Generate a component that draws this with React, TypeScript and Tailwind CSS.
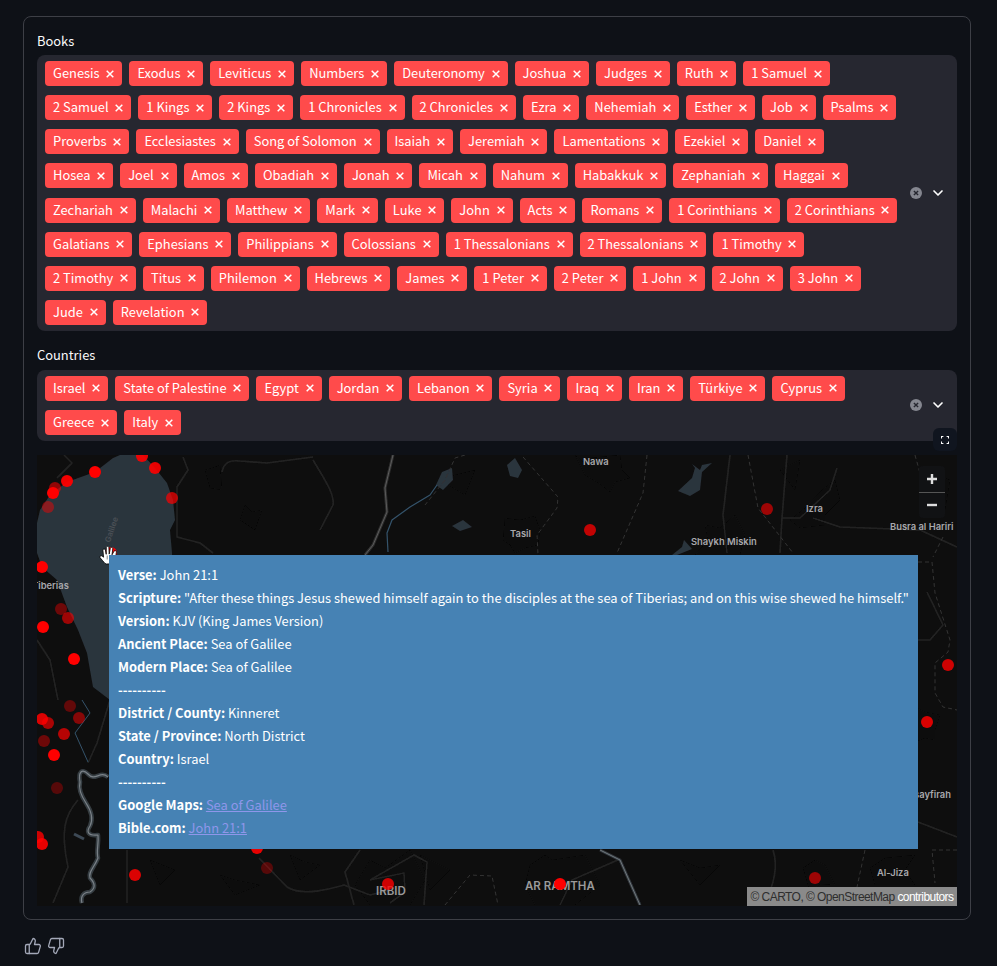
import { ChevronDown, ThumbsDown, ThumbsUp } from "lucide-react";

const books = [
  ["Genesis", "Exodus", "Leviticus", "Numbers", "Deuteronomy", "Joshua", "Judges", "Ruth", "1 Samuel"],
  ["2 Samuel", "1 Kings", "2 Kings", "1 Chronicles", "2 Chronicles", "Ezra", "Nehemiah", "Esther", "Job", "Psalms"],
  ["Proverbs", "Ecclesiastes", "Song of Solomon", "Isaiah", "Jeremiah", "Lamentations", "Ezekiel", "Daniel"],
  ["Hosea", "Joel", "Amos", "Obadiah", "Jonah", "Micah", "Nahum", "Habakkuk", "Zephaniah", "Haggai"],
  ["Zechariah", "Malachi", "Matthew", "Mark", "Luke", "John", "Acts", "Romans", "1 Corinthians", "2 Corinthians"],
  ["Galatians", "Ephesians", "Philippians", "Colossians", "1 Thessalonians", "2 Thessalonians", "1 Timothy"],
  ["2 Timothy", "Titus", "Philemon", "Hebrews", "James", "1 Peter", "2 Peter", "1 John", "2 John", "3 John"],
  ["Jude", "Revelation"],
];

const countries = [
  ["Israel", "State of Palestine", "Egypt", "Jordan", "Lebanon", "Syria", "Iraq", "Iran", "Türkiye", "Cyprus"],
  ["Greece", "Italy"],
];

// x, y, opacity
const dots: [number, number, number][] = [
  [95, 472, 1], [67, 481, 0.95], [55, 488, 0.55], [53, 493, 1], [48, 507, 0.45], [142, 456, 0.9], [155, 468, 0.9],
  [172, 498, 0.7], [42, 567, 1], [61, 609, 0.4], [68, 618, 0.6], [43, 627, 1], [74, 659, 1], [42, 719, 0.85],
  [48, 723, 0.65], [70, 706, 0.35], [79, 718, 0.5], [64, 734, 0.7], [44, 741, 0.4], [54, 755, 1], [57, 788, 0.3],
  [38, 837, 0.8], [42, 844, 0.9], [135, 875, 0.85], [257, 848, 0.9], [267, 868, 0.3], [388, 884, 0.8],
  [560, 884, 1], [815, 878, 0.6], [948, 665, 0.8], [927, 722, 0.85], [590, 530, 0.75], [767, 509, 0.6],
  [111, 553, 1],
];

const roads = [
  "M64 455L72 463L57 478", "M183 457L188 470L177 487L177 537L200 543L213 553",
  "M222 472C224 462 230 460 240 461L267 463L313 457", "M313 460C325 480 335 495 333 505L320 530", "M730 455L723 515L727 553",
  "M787 455L782 518L780 553", "M782 518L800 518L830 490L837 468", "M813 518L840 527L920 530L957 547",
  "M927 592L943 625L930 640L918 640", "M918 822L957 837", "M78 800C65 815 60 830 68 867L53 903", "M127 850L127 903",
  "M110 700L97 743L88 763", "M259 858L287 887C300 895 320 892 344 885L370 895L390 890", "M360 850L345 872L354 905",
  "M370 880L414 855L427 862L424 905", "M370 880L404 873L405 892L390 903", "M620 859L572 880L560 905",
  "M773 850C778 865 775 885 763 905", "M37 640L50 660L58 700",
];

const dashed = [
  "M523 457L558 497L557 508L537 535L538 555", "M647 455L643 493L617 553", "M748 455L758 508L793 553",
  "M915 455L920 473", "M943 537L933 557", "M445 905L470 875L492 876L498 905", "M865 850L857 887",
  "M918 562L932 562L935 593L950 640L948 652L935 663L935 693L943 707L957 710", "M957 850L932 850L935 883",
  "M465 455L455 458L445 480L425 505",
];

const blobs = [
  "M575 455L583 462L590 458L620 455L622 470L630 478L615 482L610 492L600 484L585 475Z",
  "M505 518L520 520L535 516L540 530L538 545L525 548L515 553L510 545L503 540Z",
  "M790 520L805 508L822 490L835 480L840 500L825 515L825 525L800 528Z",
  "M705 525L720 528L735 515L745 535L740 555L695 555L708 540Z",
  "M370 860L385 868L410 850L425 880L410 905L370 905L355 885Z",
  "M530 865L545 855L552 860L585 855L600 885L575 905L535 905L525 885Z",
  "M803 868L815 860L825 865L835 885L820 884L810 892Z", "M870 868L885 858L915 855L905 870L915 885L875 885Z",
  "M915 707L925 712L940 715L935 730L935 740L925 738L915 742Z", "M205 470L212 468L220 465L222 490L210 488Z",
  "M245 505L252 512L262 510L255 530L240 520Z", "M290 855L305 862L320 865L300 880Z", "M150 860L175 870L160 885Z",
  "M220 875L235 880L260 885L235 895Z", "M440 480L455 475L475 470L465 495Z", "M780 470L790 465L800 460L795 490Z",
  "M925 470L950 480L945 510L930 500Z", "M420 855L450 870L430 890Z", "M680 860L700 868L720 865L700 885Z",
];

const jordanRiver =
  "M108 777C100 770 95 782 88 774C82 768 78 772 80 782C78 790 82 797 86 803C92 812 93 820 90 826C86 832 88 836 98 835C99 845 96 850 98 858C94 868 88 872 90 878C95 883 96 888 90 892C84 892 80 896 82 903";

const Tag = ({ label }: { label: string }) => (
  <span className="flex h-[25px] items-center rounded bg-[#ff4b4b] pl-2 pr-[6px] text-[12.9px] leading-none text-white">
    <span className="whitespace-nowrap">{label}</span>
    <svg className="ml-[4.8px]" width="12" height="12" viewBox="0 0 12 12" fill="none" stroke="#fff" strokeWidth="1.5">
      <path d="M2.7 2.7L9.3 9.3M9.3 2.7L2.7 9.3" />
    </svg>
  </span>
);

const MultiSelect = ({ label, rows }: { label: string; rows: string[][] }) => (
  <div>
    <div className="flex h-[22px] items-center text-[12.9px] leading-none text-[#fafafa]">{label}</div>
    <div className="mt-[3px] flex items-center rounded-lg bg-[#262730]">
      <div className="flex flex-1 flex-col gap-y-[9.14px] py-1.5 pl-2">
        {rows.map((row) => (
          <div key={row[0]} className="flex gap-x-[7px]">
            {row.map((o) => (
              <Tag key={o} label={o} />
            ))}
          </div>
        ))}
      </div>
      <div className="flex w-[59px] items-center pl-3">
        <svg width="12" height="12" viewBox="0 0 12 12">
          <circle cx="6" cy="6" r="6" fill="#84868f" />
          <path d="M3.9 3.9L8.1 8.1M8.1 3.9L3.9 8.1" stroke="#262730" strokeWidth="1.4" />
        </svg>
        <ChevronDown className="ml-[8px] text-white" size={16} strokeWidth={2.5} />
      </div>
    </div>
  </div>
);

const MapCanvas = () => (
  <svg className="block h-full w-full" viewBox="37 455 920 451" fontFamily="Inter, sans-serif" fontWeight="600">
    <defs>
      <filter id="soft" x="0" y="0" width="1" height="1">
        <feGaussianBlur stdDeviation="0.5" />
      </filter>
    </defs>
    <rect x="37" y="455" width="920" height="451" fill="#0e0e0e" />
    <g filter="url(#soft)">
      {blobs.map((d) => (
        <path key={d} d={d} fill="#0a0a0a" />
      ))}
      <path
        d="M37 523L40 510L50 495L67 482L95 472L113 458L120 455L143 455L155 468L167 483L173 500L175 520L170 530L172 553L172 700L110 700L93 687L87 653L78 630L67 607L57 580L42 567L37 553Z"
        fill="#2b343c"
      />
      <g fill="#2b343c">
        <path d="M436 485L442 472L452 468L453 480L443 490Z" />
        <path d="M507 465L515 458L522 470L518 478L510 476Z" />
        <path d="M452 526L463 520L472 527L460 531Z" />
        <path d="M678 491L692 478L695 468L692 464L700 470L702 465L712 463L702 472L700 490L690 496Z" />
        <path d="M672 555L682 547L684 540L692 549L672 557Z" />
      </g>
      <g fill="none" strokeLinejoin="round">
        {roads.map((d) => (
          <path key={d} d={d} stroke="#232323" strokeWidth="1.6" />
        ))}
        {dashed.map((d) => (
          <path key={d} d={d} stroke="#333" strokeWidth="1" strokeDasharray="4 3" />
        ))}
        <path d="M393 455L385 488L387 512L373 545L365 555" stroke="#2e2e2e" strokeWidth="3" />
        <path d="M393 455L385 488L387 512L373 545L365 555" stroke="#5c5c5c" strokeWidth="1" />
        <path d="M437 485L430 495L410 507L392 520L387 533L388 552" stroke="#34536b" strokeWidth="1.2" />
        <path d="M82 700L90 713L75 733L88 762" stroke="#34536b" strokeWidth="1" />
        <path d={jordanRiver} stroke="#363d42" strokeWidth="4.5" />
        <path d={jordanRiver} stroke="#7a8187" strokeWidth="1.2" />
        <path d="M600 850L620 860L640 905" stroke="#32383d" strokeWidth="3" />
        <path d="M600 850L620 860L640 905" stroke="#70777d" strokeWidth="1" />
        <path d="M74 834L84 839" stroke="#3c4a54" strokeWidth="3" />
      </g>
    </g>
    <g fill="#a8a8ac" fontSize="9.4">
      <text x="583" y="465">Nawa</text>
      <text x="510" y="537">Tasil</text>
      <text x="691" y="545">Shaykh Miskin</text>
      <text x="806" y="512">Izra</text>
      <text x="890" y="530">Busra al Hariri</text>
      <text x="32" y="589">Tiberias</text>
      <text x="951" y="798" textAnchor="end">Al Busayfirah</text>
      <text x="877" y="876">Al-Jiza</text>
      <text x="376" y="895" fontSize="11.5" fill="#9a9a9a">IRBID</text>
      <text x="525" y="890" fontSize="11.5" fill="#9a9a9a">AR RAMTHA</text>
      <text x="0" y="0" fontSize="8" fill="#4a5056" transform="translate(110 543) rotate(-72)">Galilee</text>
    </g>
    {dots.map(([x, y, o]) => (
      <circle key={`${x}-${y}`} cx={x} cy={y} r="6" fill="#ff0000" fillOpacity={o} />
    ))}
  </svg>
);

const HandCursor = () => (
  <svg className="absolute left-[62px] top-[90px]" width="20" height="20" viewBox="0 0 20 20">
    <path
      d="M6 18.5C4.5 16.5 2.5 14.5 1 12.6C0.4 11.3 1.8 10.2 3 10.9L4.6 12.2L3.9 5.2C3.8 3.6 6.1 3.5 6.4 5L7.2 9.3L7.3 2.6C7.4 0.9 9.8 0.9 9.9 2.6L10.2 9.1L11.3 3.3C11.7 1.7 14 2.1 13.8 3.7L13 9.8L14.9 6.4C15.7 5 17.8 5.7 17.4 7.2C16.7 9.6 17.2 11.8 16.8 14.2C16.5 15.8 15.8 17 15.3 18.7L7.5 19Z"
      fill="#fff"
      stroke="#000"
      strokeWidth="0.8"
    />
    <path d="M8.2 10.5V14.5M10.8 10.5V14.5M13.2 11V14.5" stroke="#555" strokeWidth="0.7" />
  </svg>
);

const Line = ({ name, children }: { name: string; children: React.ReactNode }) => (
  <div className="h-[23px] whitespace-nowrap">
    <b className="font-bold">{name}:</b> {children}
  </div>
);

const MapTooltip = () => (
  <div className="absolute left-[72px] top-[100px] h-[294px] w-[809px] bg-[#4682b4] px-[9px] pt-[8px] text-[12.9px] leading-[23px] text-white">
    <Line name="Verse">John 21:1</Line>
    <Line name="Scripture">
      "After these things Jesus shewed himself again to the disciples at the sea of Tiberias; and on this wise shewed he himself."
    </Line>
    <Line name="Version">KJV (King James Version)</Line>
    <Line name="Ancient Place">Sea of Galilee</Line>
    <Line name="Modern Place">Sea of Galilee</Line>
    <div className="h-[23px] font-bold">----------</div>
    <Line name="District / County">Kinneret</Line>
    <Line name="State / Province">North District</Line>
    <Line name="Country">Israel</Line>
    <div className="h-[23px] font-bold">----------</div>
    <Line name="Google Maps">
      <a className="text-[#8f96ea] underline" href="#">Sea of Galilee</a>
    </Line>
    <Line name="Bible.com">
      <a className="text-[#8f96ea] underline" href="#">John 21:1</a>
    </Line>
  </div>
);

export default function App() {
  return (
    <div className="min-h-[966px] bg-[#0e1117] pl-[23px] pr-[26px] pt-4 font-['Noto_Sans_CJK_JP',sans-serif]">
      <div className="rounded-lg border border-[#3d3f46] px-[13px] pb-[13px] pt-[13px]">
        <MultiSelect label="Books" rows={books} />
        <div className="mt-[14px]">
          <MultiSelect label="Countries" rows={countries} />
        </div>
        <div className="relative mt-[14px] h-[451px]">
          <button className="absolute -top-[27px] right-0 z-10 flex h-[23px] w-[24px] items-center justify-center rounded-md bg-[#10151f]">
            <svg width="8" height="8" viewBox="0 0 10 10" fill="none" stroke="#fafafa" strokeWidth="1.4">
              <path d="M.6 3V.6H3M7 .6H9.4V3M9.4 7V9.4H7M3 9.4H.6V7" />
            </svg>
          </button>
          <MapCanvas />
          <div className="absolute right-[12px] top-[11px] flex h-[52px] w-[26px] flex-col rounded bg-[#111214]">
            <div className="flex flex-1 items-center justify-center border-b border-[#555]">
              <svg width="12" height="12" viewBox="0 0 12 12" stroke="#ddd" strokeWidth="2.4">
                <path d="M1 6H11M6 1V11" />
              </svg>
            </div>
            <div className="flex flex-1 items-center justify-center">
              <svg width="12" height="12" viewBox="0 0 12 12" stroke="#ddd" strokeWidth="2.4">
                <path d="M1 6H11" />
              </svg>
            </div>
          </div>
          <HandCursor />
          <MapTooltip />
          <div className="absolute bottom-0 right-0 flex h-[19px] w-[210px] items-center justify-center whitespace-nowrap bg-[#8a8a8a] font-['Liberation_Sans',sans-serif] text-[12px] tracking-[-0.55px] text-[#2e2e2e]">
            © CARTO, © OpenStreetMap&nbsp;<span className="text-white">contributors</span>
          </div>
        </div>
      </div>
      <div className="mt-[17px] flex items-center gap-[5px] pl-[1px] text-[#a3a8b8]">
        <ThumbsUp size={18} strokeWidth={1.75} />
        <ThumbsDown size={18} strokeWidth={1.75} />
      </div>
    </div>
  );
}
